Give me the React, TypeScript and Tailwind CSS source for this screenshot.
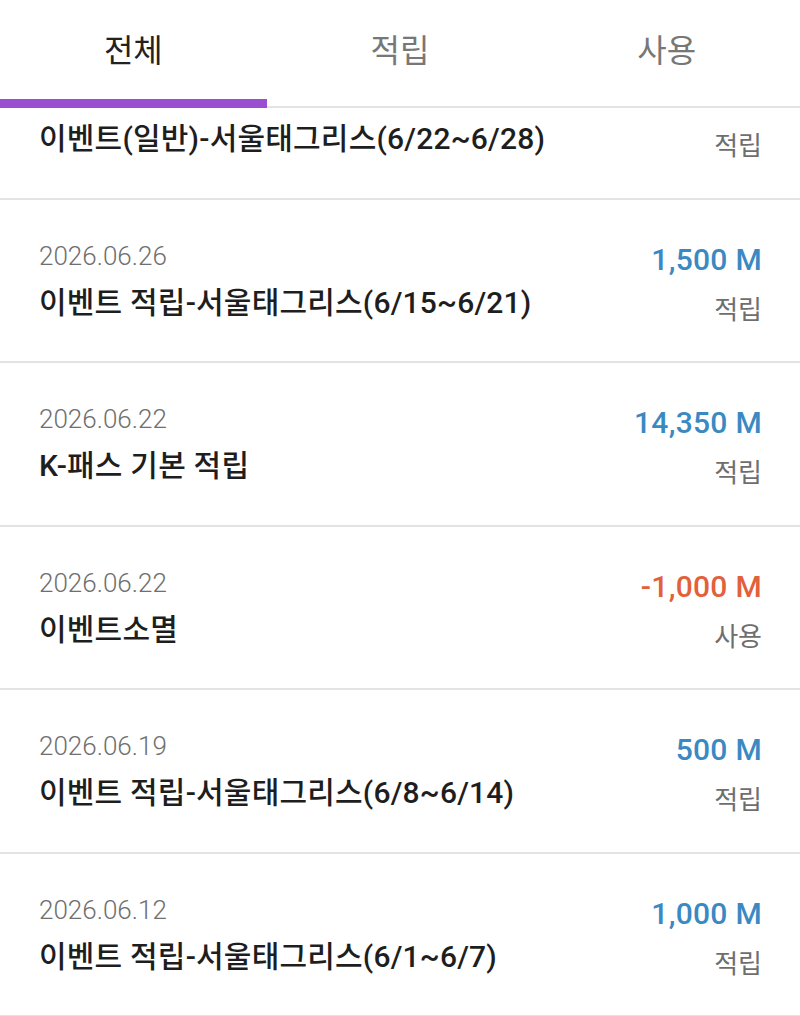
import React from 'react';

type Entry = {
  date?: string;
  title: string;
  amount?: string;
  kind: '적립' | '사용';
};

// first row is scrolled up under the tab bar, its date and amount are hidden
const entries: Entry[] = [
  { title: '이벤트(일반)-서울태그리스(6/22~6/28)', kind: '적립' },
  { date: '2026.06.26', title: '이벤트 적립-서울태그리스(6/15~6/21)', amount: '1,500 M', kind: '적립' },
  { date: '2026.06.22', title: 'K-패스 기본 적립', amount: '14,350 M', kind: '적립' },
  { date: '2026.06.22', title: '이벤트소멸', amount: '-1,000 M', kind: '사용' },
  { date: '2026.06.19', title: '이벤트 적립-서울태그리스(6/8~6/14)', amount: '500 M', kind: '적립' },
  { date: '2026.06.12', title: '이벤트 적립-서울태그리스(6/1~6/7)', amount: '1,000 M', kind: '적립' },
];

const tabs = ['전체', '적립', '사용'];

export default function App() {
  const [active, setActive] = React.useState(0);

  return (
    <div
      className="w-[800px] h-[1016px] bg-white flex flex-col overflow-hidden"
      style={{ fontFamily: "Roboto, 'Noto Sans CJK KR', sans-serif" }}
    >
      {/* Tabs */}
      <div className="relative z-10 h-[108px] shrink-0 bg-white border-b-2 border-[#e3e3e3] flex">
        {tabs.map((t, i) => (
          <button
            key={t}
            onClick={() => setActive(i)}
            className="relative flex-1 flex items-start justify-center pt-[29px]"
          >
            <span
              className={`text-[32px] leading-[44px] ${
                active === i ? 'text-[#222222]' : 'text-[#777777]'
              }`}
            >
              {t}
            </span>
            {active === i && (
              <span className="absolute left-0 right-0 bottom-[-2px] h-[9px] bg-[#9a4ed0]" />
            )}
          </button>
        ))}
      </div>

      {/* List (scrolled a little) */}
      <div className="flex-1 overflow-hidden">
        <div className="-mt-[72px]">
          {entries.map((e, i) => (
            <div
              key={i}
              className="h-[163.5px] border-b-2 border-[#e3e3e3] flex justify-between pl-[39px] pr-[38px] pt-[40px]"
            >
              <div className="flex flex-col">
                <span className="h-[32px] text-[26px] leading-[32px] font-light text-[#6f6f6f]">{e.date}</span>
                <span className="mt-[13px] text-[30px] leading-[36px] font-medium tracking-[0.2px] text-[#1e1e1e]">
                  {e.title}
                </span>
              </div>
              <div className="flex flex-col items-end mt-[2px]">
                <span
                  className={`h-[36px] text-[30px] leading-[36px] font-medium tracking-[0.3px] ${
                    e.amount?.startsWith('-') ? 'text-[#e2603a]' : 'text-[#3a89c3]'
                  }`}
                >
                  {e.amount}
                </span>
                <span className="mt-[16px] text-[26px] leading-[32px] text-[#6e6e6e]">
                  {e.kind}
                </span>
              </div>
            </div>
          ))}
        </div>
      </div>
    </div>
  );
}
